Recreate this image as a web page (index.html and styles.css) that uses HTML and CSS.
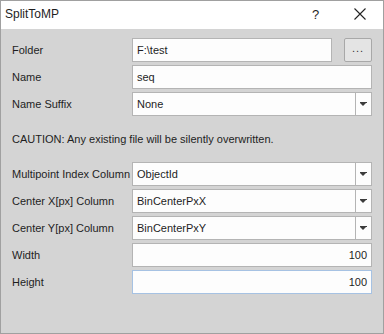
FILE: index.html
```html
<!DOCTYPE html>
<html lang="en">
<head>
    <meta charset="UTF-8">
    <title>SplitToMP</title>
    <link rel="stylesheet" href="styles.css">
</head>
<body>
    <div class="window">
        <div class="titlebar">
            <span class="title">SplitToMP</span>
            <span class="help">?</span>
            <span class="close">
                <svg width="12" height="12" viewBox="0 0 12 12"><path d="M0.5 0.5 L11.5 11.5 M11.5 0.5 L0.5 11.5" stroke="#222" stroke-width="1.1" fill="none"/></svg>
            </span>
        </div>
        <div class="content">
            <div class="form">
                <label>Folder</label>
                <div class="folderRow">
                    <div class="field">F:\test</div>
                    <button class="browse">...</button>
                </div>
                <label>Name</label>
                <div class="field">seq</div>
                <label>Name Suffix</label>
                <div class="field combo">None<span class="arrow"></span></div>
            </div>

            <p class="caution">CAUTION: Any existing file will be silently overwritten.</p>

            <div class="form">
                <label>Multipoint Index Column</label>
                <div class="field combo">ObjectId<span class="arrow"></span></div>
                <label>Center X[px] Column</label>
                <div class="field combo">BinCenterPxX<span class="arrow"></span></div>
                <label>Center Y[px] Column</label>
                <div class="field combo">BinCenterPxY<span class="arrow"></span></div>
                <label>Width</label>
                <div class="field number">100</div>
                <label>Height</label>
                <div class="field number focused">100</div>
            </div>
        </div>
    </div>
</body>
</html>
```

FILE: styles.css
```css
body {
    margin: 0;
    font-family: "Liberation Sans", Arial, sans-serif;
    font-size: 11px;
    color: #1e1e1e;
}
.window {
    width: 384px;
    height: 334px;
    box-sizing: border-box;
    border: 1px solid #a0a0a0;
    display: flex;
    flex-direction: column;
}
.titlebar {
    height: 28px;
    background: #fff;
    display: flex;
    align-items: center;
    font-size: 12px;
}
.title {
    flex: 1;
    padding-left: 4px;
    padding-bottom: 2px;
}
.help {
    width: 12px;
    margin-right: 30px;
    font-size: 13px;
    padding-bottom: 2px;
}
.close {
    width: 12px;
    height: 12px;
    margin-right: 17px;
    display: flex;
    margin-bottom: 2px;
}
.content {
    flex: 1;
    background: #d4d4d4;
    padding: 9px 11px 0 11px;
}
.form {
    display: grid;
    grid-template-columns: 120px 240px;
    grid-auto-rows: 24px;
    row-gap: 3px;
}
.form label {
    display: flex;
    align-items: center;
    white-space: nowrap;
}
.field {
    box-sizing: border-box;
    height: 24px;
    background: #fdfdfd;
    border: 1px solid #b4b4b4;
    padding: 0 4px;
    display: flex;
    align-items: center;
    position: relative;
}
.folderRow {
    display: flex;
    gap: 12px;
}
.folderRow .field {
    flex: 1;
}
.browse {
    width: 28px;
    height: 24px;
    margin: 0;
    padding: 0 0 4px 0;
    border: 1px solid #a8a8a8;
    border-radius: 2px;
    background: #e4e4e4;
    font-family: "Liberation Sans", Arial, sans-serif;
    font-size: 11px;
    color: #333;
    letter-spacing: 1px;
}
.combo .arrow {
    position: absolute;
    right: 0;
    top: 0;
    bottom: 0;
    width: 15px;
    border-left: 1px solid #b4b4b4;
}
.combo .arrow::before {
    content: "";
    position: absolute;
    left: 4px;
    top: 9px;
    width: 7px;
    height: 1px;
    background: #3c3c3c;
}
.combo .arrow::after {
    content: "";
    position: absolute;
    left: 4px;
    top: 10px;
    border-top: 3px solid #3c3c3c;
    border-left: 3.5px solid transparent;
    border-right: 3.5px solid transparent;
    width: 0;
}
.number {
    justify-content: flex-end;
}
.focused {
    border-color: #a6c2e3;
}
.caution {
    margin: 0;
    height: 46px;
    display: flex;
    align-items: center;
}
```
